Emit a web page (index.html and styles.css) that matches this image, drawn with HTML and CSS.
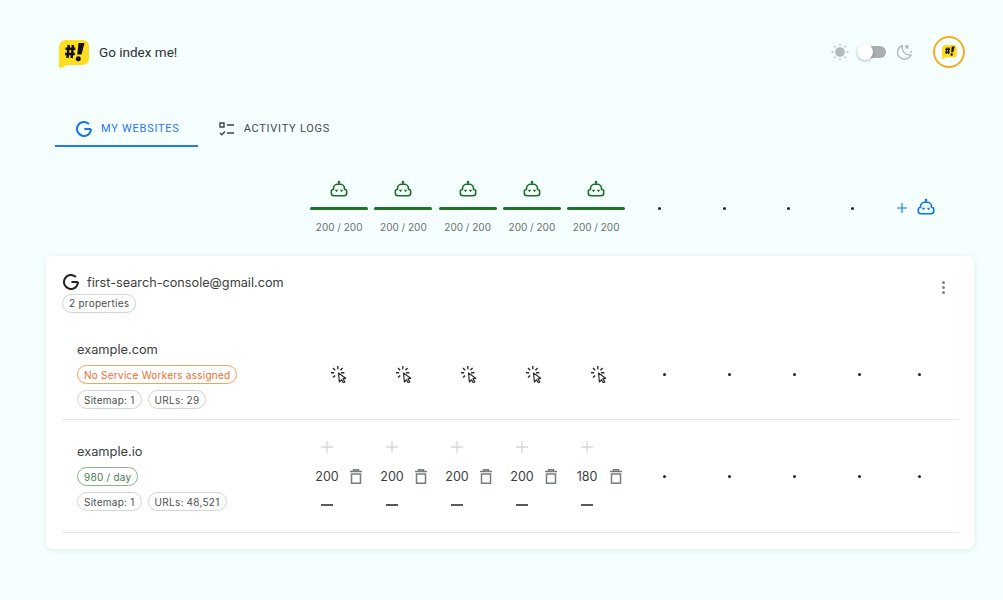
FILE: index.html
```html
<!DOCTYPE html>
<html lang="en">
<head>
<meta charset="utf-8">
<title>Go index me!</title>
<link rel="stylesheet" href="styles.css">
</head>
<body>
<svg class="defs" width="0" height="0" aria-hidden="true">
  <defs>
    <symbol id="robot" viewBox="0 0 20 20">
      <path d="M10 2v2.500" fill="none" stroke="currentColor" stroke-width="1.500"/>
      <circle cx="10" cy="2" r="1.300" fill="currentColor"/>
      <path d="M4.500 9.500V8.500a4.200 4.200 0 0 1 4.200-4.200h2.600a4.200 4.200 0 0 1 4.200 4.200v1H16a1.700 1.700 0 0 1 1.700 1.700V13a2.700 2.700 0 0 1-2.700 2.700H5A2.700 2.700 0 0 1 2.300 13V11.200A1.700 1.700 0 0 1 4 9.500z" fill="none" stroke="currentColor" stroke-width="1.600" stroke-linejoin="round"/>
      <path d="M5.800 9.800l1.700 2.400 1.700-2.400zM10.800 9.800l1.700 2.400 1.700-2.400z" fill="currentColor"/>
    </symbol>
    <symbol id="click" viewBox="0 0 18 18">
      <path d="M7.800 1v3.200M1 7.800h3.200M3 3l2.200 2.200M12.600 3l-2.200 2.200M3 12.600l2.200-2.200M11 7.800h3.400" fill="none" stroke="currentColor" stroke-width="1.400"/>
      <path d="M8.500 8l.9 9 2-2.200 1.900 3 1.500-.9-1.900-3 2.800-.6z" fill="none" stroke="currentColor" stroke-width="1.200" stroke-linejoin="round"/>
    </symbol>
    <symbol id="trash" viewBox="0 0 12 15">
      <path d="M0 2.500h12M3.500 2.500V.8h5v1.700M1.500 5h9v9.200h-9z" fill="none" stroke="currentColor" stroke-width="1.500"/>
    </symbol>
    <symbol id="plus" viewBox="0 0 14 14">
      <path d="M7 0v14M0 7h14" fill="none" stroke="currentColor" stroke-width="1.500"/>
    </symbol>
    <symbol id="bubble" viewBox="0 0 30 28">
      <path d="M7 0h17a6 6 0 0 1 6 6v13a6 6 0 0 1-6 6H8l-5.500 2.700q-2.500 .8-2.500-1.700V7a7 7 0 0 1 7-7z" fill="#ffdd1f"/>
      <path d="M9.800 5l-1.400 13M14 5l-1.400 13M6.500 8.800h9.800M6 14h9.800" fill="none" stroke="#111" stroke-width="2.500"/>
      <path d="M19.500 3h6l-3 11.500h-4.200z" fill="#111"/>
      <circle cx="19.300" cy="18.800" r="2.500" fill="#111"/>
    </symbol>
  </defs>
</svg>

<header class="top">
  <div class="brand">
    <svg class="brand-logo"><use href="#bubble"/></svg>
    <span class="brand-name">Go index me!</span>
  </div>
  <div class="top-tools">
    <svg class="theme-icon" viewBox="0 0 18 18">
      <circle cx="9" cy="9" r="4.800" fill="#b3b8b8"/>
      <path d="M9 .5v2M9 15.500v2M.5 9h2M15.500 9h2M3 3l1.400 1.400M13.600 13.600L15 15M3 15l1.400-1.400M13.600 4.400L15 3" stroke="#b3b8b8" stroke-width="1.300" fill="none"/>
    </svg>
    <div class="switch"><span class="knob"></span></div>
    <svg class="theme-icon moon" viewBox="0 0 18 18">
      <path d="M7.500 2.500a7 7 0 1 0 8.500 9.500 7.500 7.500 0 0 1-8.500-9.500z" fill="none" stroke="#b3b8b8" stroke-width="1.400" stroke-linejoin="round"/>
      <path d="M12 1l.8 1.800 1.900.2-1.400 1.300.4 1.900-1.700-1-1.700 1 .4-1.900-1.400-1.300 1.900-.2zM16 7.500l.5 1 1 .5-1 .5-.5 1-.5-1-1-.5 1-.5z" fill="#b3b8b8"/>
    </svg>
    <div class="avatar"><svg class="avatar-logo"><use href="#bubble"/></svg></div>
  </div>
</header>

<nav class="tabs">
  <a class="tab active">
    <svg class="tab-icon" viewBox="0 0 16 16"><path d="M15 8.100H8.400M15 8.100a7 7 0 1 1-2.100-5.100" fill="none" stroke="#1a73e8" stroke-width="2"/></svg>
    MY WEBSITES
  </a>
  <a class="tab">
    <svg class="tab-icon" viewBox="0 0 16 16"><path d="M1 2h4v4H1zM8 4h7M1 12l1.800 1.800L6 10.500M8 12h7" fill="none" stroke="#3f4444" stroke-width="1.400"/></svg>
    ACTIVITY LOGS
  </a>
</nav>

<section class="quota">
  <div class="quota-cell"><svg class="robot green"><use href="#robot"/></svg><span class="bar"></span><span class="quota-text">200 / 200</span></div>
  <div class="quota-cell"><svg class="robot green"><use href="#robot"/></svg><span class="bar"></span><span class="quota-text">200 / 200</span></div>
  <div class="quota-cell"><svg class="robot green"><use href="#robot"/></svg><span class="bar"></span><span class="quota-text">200 / 200</span></div>
  <div class="quota-cell"><svg class="robot green"><use href="#robot"/></svg><span class="bar"></span><span class="quota-text">200 / 200</span></div>
  <div class="quota-cell"><svg class="robot green"><use href="#robot"/></svg><span class="bar"></span><span class="quota-text">200 / 200</span></div>
  <div class="quota-dot"><span class="dot"></span></div>
  <div class="quota-dot"><span class="dot"></span></div>
  <div class="quota-dot"><span class="dot"></span></div>
  <div class="quota-dot"><span class="dot"></span></div>
  <div class="quota-add">
    <svg class="add-plus"><use href="#plus"/></svg>
    <svg class="robot blue"><use href="#robot"/></svg>
  </div>
</section>

<main class="card">
  <div class="account">
    <div class="account-info">
      <div class="account-line">
        <svg class="account-g" viewBox="0 0 16 16"><path d="M15 8.100H8.400M15 8.100a7 7 0 1 1-2.100-5.100" fill="none" stroke="#222" stroke-width="2"/></svg>
        <span class="email">first-search-console@gmail.com</span>
      </div>
      <span class="pill">2 properties</span>
    </div>
    <div class="kebab"><i></i><i></i><i></i></div>
  </div>

  <div class="site first">
    <div class="site-info">
      <div class="site-name">example.com</div>
      <div class="pills"><span class="pill orange">No Service Workers assigned</span></div>
      <div class="pills"><span class="pill">Sitemap: 1</span><span class="pill">URLs: 29</span></div>
    </div>
    <div class="slot"><svg class="click"><use href="#click"/></svg></div>
    <div class="slot"><svg class="click"><use href="#click"/></svg></div>
    <div class="slot"><svg class="click"><use href="#click"/></svg></div>
    <div class="slot"><svg class="click"><use href="#click"/></svg></div>
    <div class="slot"><svg class="click"><use href="#click"/></svg></div>
    <div class="slot"><span class="dot"></span></div>
    <div class="slot"><span class="dot"></span></div>
    <div class="slot"><span class="dot"></span></div>
    <div class="slot"><span class="dot"></span></div>
    <div class="slot"><span class="dot"></span></div>
  </div>

  <div class="site">
    <div class="site-info">
      <div class="site-name">example.io</div>
      <div class="pills"><span class="pill green-pill">980 / day</span></div>
      <div class="pills"><span class="pill">Sitemap: 1</span><span class="pill">URLs: 48,521</span></div>
    </div>
    <div class="slot"><div class="alloc"><svg class="alloc-plus"><use href="#plus"/></svg><div class="alloc-row"><span class="alloc-value">200</span><svg class="trash"><use href="#trash"/></svg></div><span class="alloc-minus"></span></div></div>
    <div class="slot"><div class="alloc"><svg class="alloc-plus"><use href="#plus"/></svg><div class="alloc-row"><span class="alloc-value">200</span><svg class="trash"><use href="#trash"/></svg></div><span class="alloc-minus"></span></div></div>
    <div class="slot"><div class="alloc"><svg class="alloc-plus"><use href="#plus"/></svg><div class="alloc-row"><span class="alloc-value">200</span><svg class="trash"><use href="#trash"/></svg></div><span class="alloc-minus"></span></div></div>
    <div class="slot"><div class="alloc"><svg class="alloc-plus"><use href="#plus"/></svg><div class="alloc-row"><span class="alloc-value">200</span><svg class="trash"><use href="#trash"/></svg></div><span class="alloc-minus"></span></div></div>
    <div class="slot"><div class="alloc"><svg class="alloc-plus"><use href="#plus"/></svg><div class="alloc-row"><span class="alloc-value">180</span><svg class="trash"><use href="#trash"/></svg></div><span class="alloc-minus"></span></div></div>
    <div class="slot"><span class="dot"></span></div>
    <div class="slot"><span class="dot"></span></div>
    <div class="slot"><span class="dot"></span></div>
    <div class="slot"><span class="dot"></span></div>
    <div class="slot"><span class="dot"></span></div>
  </div>
</main>
</body>
</html>
```

FILE: styles.css
```css
* { box-sizing: border-box; }
html, body { margin: 0; height: 600px; overflow: hidden; }
body {
  background: #f5ffff;
  color: #2f3333;
  font-family: Inter, "Liberation Sans", sans-serif;
  padding: 36px 29px 0 46px;
}
.defs { position: absolute; }

/* header */
.top { display: flex; justify-content: space-between; align-items: center; height: 32px; padding: 0 9px 0 13px; }
.brand { display: flex; align-items: center; gap: 10px; }
.brand-logo { width: 30px; height: 28px; margin-top: 4px; display: block; }
.brand-name { font: 400 13.500px Roboto, sans-serif; color: #2c2f2f; }
.top-tools { display: flex; align-items: center; }
.theme-icon { width: 18px; height: 18px; }
.switch { position: relative; width: 29px; height: 12px; margin: 0 9px 0 8px; border-radius: 6px; background: #a9adad; }
.knob { position: absolute; left: 0; top: -2px; width: 16px; height: 16px; border-radius: 50%; background: #fff; box-shadow: 0 1px 3px rgba(0,0,0,.3); }
.moon { margin-right: 20px; }
.avatar { width: 32px; height: 32px; border-radius: 50%; border: 2px solid #edb01c; display: flex; align-items: center; justify-content: center; }
.avatar-logo { width: 15px; height: 14px; display: block; }

/* tabs */
.tabs { display: flex; margin: 31px 0 0 9px; }
.tab { display: flex; align-items: center; height: 48px; padding: 13px 18px 0 21px; gap: 9px; font: 400 11px Roboto, sans-serif; letter-spacing: .75px; color: #444a4a; border-bottom: 2px solid transparent; }
.tab.active { color: #2a77e8; border-bottom-color: #1f7bee; }
.tab-icon { width: 16px; height: 16px; }

/* quota */
.quota { display: grid; grid-template-columns: repeat(9, 64.250px) auto; margin: 31px 0 0 261px; height: 75px; }
.quota-cell { display: flex; flex-direction: column; align-items: center; }
.robot { width: 20px; height: 20px; display: block; }
.green { color: #1b6e22; margin-top: 2px; }
.blue { color: #0f72ea; }
.bar { width: 58px; height: 3px; background: #1f7224; border-radius: 2px; margin-top: 7px; }
.quota-text { margin-top: 10px; font-size: 10px; color: #6a6f6f; line-height: 14px; }
.quota-dot { display: flex; justify-content: center; padding: 29px 1px 0 0; }
.dot { width: 3px; height: 3px; border-radius: 50%; background: #222; display: block; }
.quota-add { display: flex; align-items: center; gap: 9px; height: 20px; margin: 20px 0 0 12px; }
.add-plus { width: 10px; height: 10px; color: #0f72ea; }

/* card */
.card { background: #fff; border-radius: 6px; height: 293px; margin-top: 3px; padding: 0 15px 0 16px; box-shadow: 0 1px 6px rgba(120,140,140,.18); }
.account { display: flex; justify-content: space-between; padding-top: 17px; height: 74px; }
.account-line { display: flex; align-items: center; gap: 8px; height: 18px; }
.account-g { width: 16px; height: 16px; margin-left: 1px; }
.email { font-size: 12.700px; color: #3a3e3e; }
.account-info .pill { margin-top: 2px; }
.kebab { display: flex; flex-direction: column; gap: 2px; margin: 8px 14px 0 0; }
.kebab i { width: 3px; height: 3px; border-radius: 50%; background: #808585; display: block; }

.pill { display: inline-flex; align-items: center; height: 19px; padding: 0 6px; border: 1px solid #d3d6d6; border-radius: 10px; font-size: 10px; letter-spacing: .25px; color: #4b4f4f; }
.orange { border-color: #f5a25a; color: #ef6c2b; }
.green-pill { border-color: #82b887; color: #4c7a50; }

.site { display: grid; grid-template-columns: 244px repeat(9, 65px) 56px; align-items: center; padding: 11px 0; border-bottom: 1px solid #e6e8e8; }
.site.first { padding: 9px 0 10px; }
.site-info { padding: 2px 0 0 15px; }
.site-name { font-size: 12.800px; line-height: 18px; color: #3a3e3e; margin-bottom: 6px; }
.pills { display: flex; gap: 6px; margin-bottom: 6px; }
.pills:last-child { margin-bottom: 0; }
.slot { display: flex; justify-content: center; align-items: center; }
.slot .dot { margin-left: 2px; }
.slot:last-child .dot { margin-left: 0; }
.click { width: 18px; height: 18px; color: #2a2d2d; }
.alloc { display: flex; flex-direction: column; align-items: center; width: 65px; height: 90px; }
.alloc-plus { width: 12px; height: 12px; color: #d4d7d7; margin: 10px 23px 0 0; }
.alloc-row { display: flex; align-items: center; gap: 11px; margin-top: 14px; height: 18px; }
.alloc-value { font-size: 12.500px; color: #3a3e3e; width: 24px; text-align: center; }
.trash { width: 12px; height: 15px; color: #777c7c; }
.alloc-minus { width: 12px; height: 2px; background: #555a5a; margin: 19px 23px 0 0; }
```
